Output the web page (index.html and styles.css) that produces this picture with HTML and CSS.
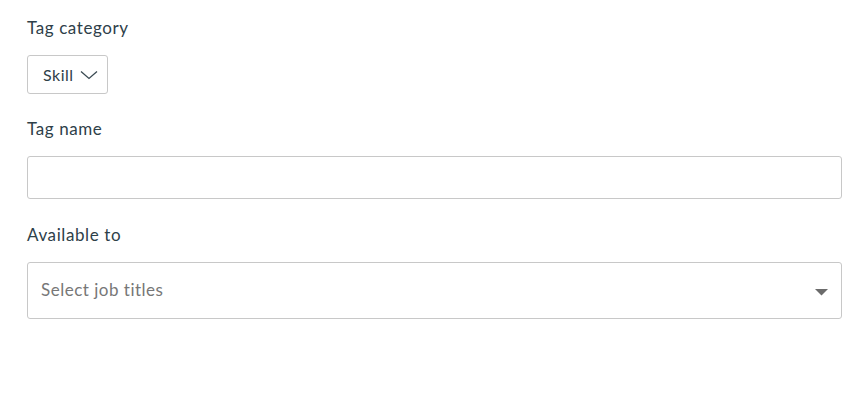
FILE: index.html
```html
<!DOCTYPE html>
<html>
<head>
<meta charset="utf-8">
<link rel="stylesheet" href="styles.css">
</head>
<body>
<form class="form">
  <div class="field">
    <div class="label">Tag category</div>
    <button type="button" class="dropdown-btn">
      <span>Skill</span>
      <svg class="chev" width="18" height="10" viewBox="0 0 18 10"><path d="M1 1.5 L9 8.5 L17 1.5" fill="none" stroke="#3a4a52" stroke-width="1.3"/></svg>
    </button>
  </div>
  <div class="field mid">
    <div class="label">Tag name</div>
    <div class="input"></div>
  </div>
  <div class="field last">
    <div class="label">Available to</div>
    <div class="select">
      <span class="placeholder">Select job titles</span>
      <svg class="caret" width="13" height="7" viewBox="0 0 13 7"><path d="M0 0 H13 L6.5 6.5 Z" fill="#6b6b6b"/></svg>
    </div>
  </div>
</form>
</body>
</html>
```
FILE: styles.css
```css
html, body { margin: 0; padding: 0; background: #fff; }
body { font-family: Lato, "Open Sans", sans-serif; color: #2e4049; letter-spacing: 0.6px; }
.form { padding: 17px 18px 0 27px; display: flex; flex-direction: column; }
.field { display: flex; flex-direction: column; align-items: flex-start; }
.label { font-size: 17px; line-height: 22px; margin-bottom: 16px; }
.field.mid { margin-top: 24px; }
.field.last { margin-top: 25px; }
.dropdown-btn {
  display: flex; align-items: center; gap: 6px;
  height: 39px; padding: 0 9px 0 15px;
  border: 1px solid #c8c8c8; border-radius: 3px; background: #fff;
  font-family: inherit; font-size: 16px; color: #2e4049; letter-spacing: 0.5px;
}
.input {
  align-self: stretch; height: 41px;
  border: 1px solid #c8c8c8; border-radius: 3px;
}
.select {
  align-self: stretch; height: 57px; box-sizing: border-box;
  border: 1px solid #c8c8c8; border-radius: 3px;
  display: flex; align-items: center; justify-content: space-between;
  padding: 0 13px 0 13px;
}
.placeholder { font-size: 17px; color: #777; letter-spacing: 0.5px; margin-bottom: 3px; }
.caret { margin-top: 4px; }
```
